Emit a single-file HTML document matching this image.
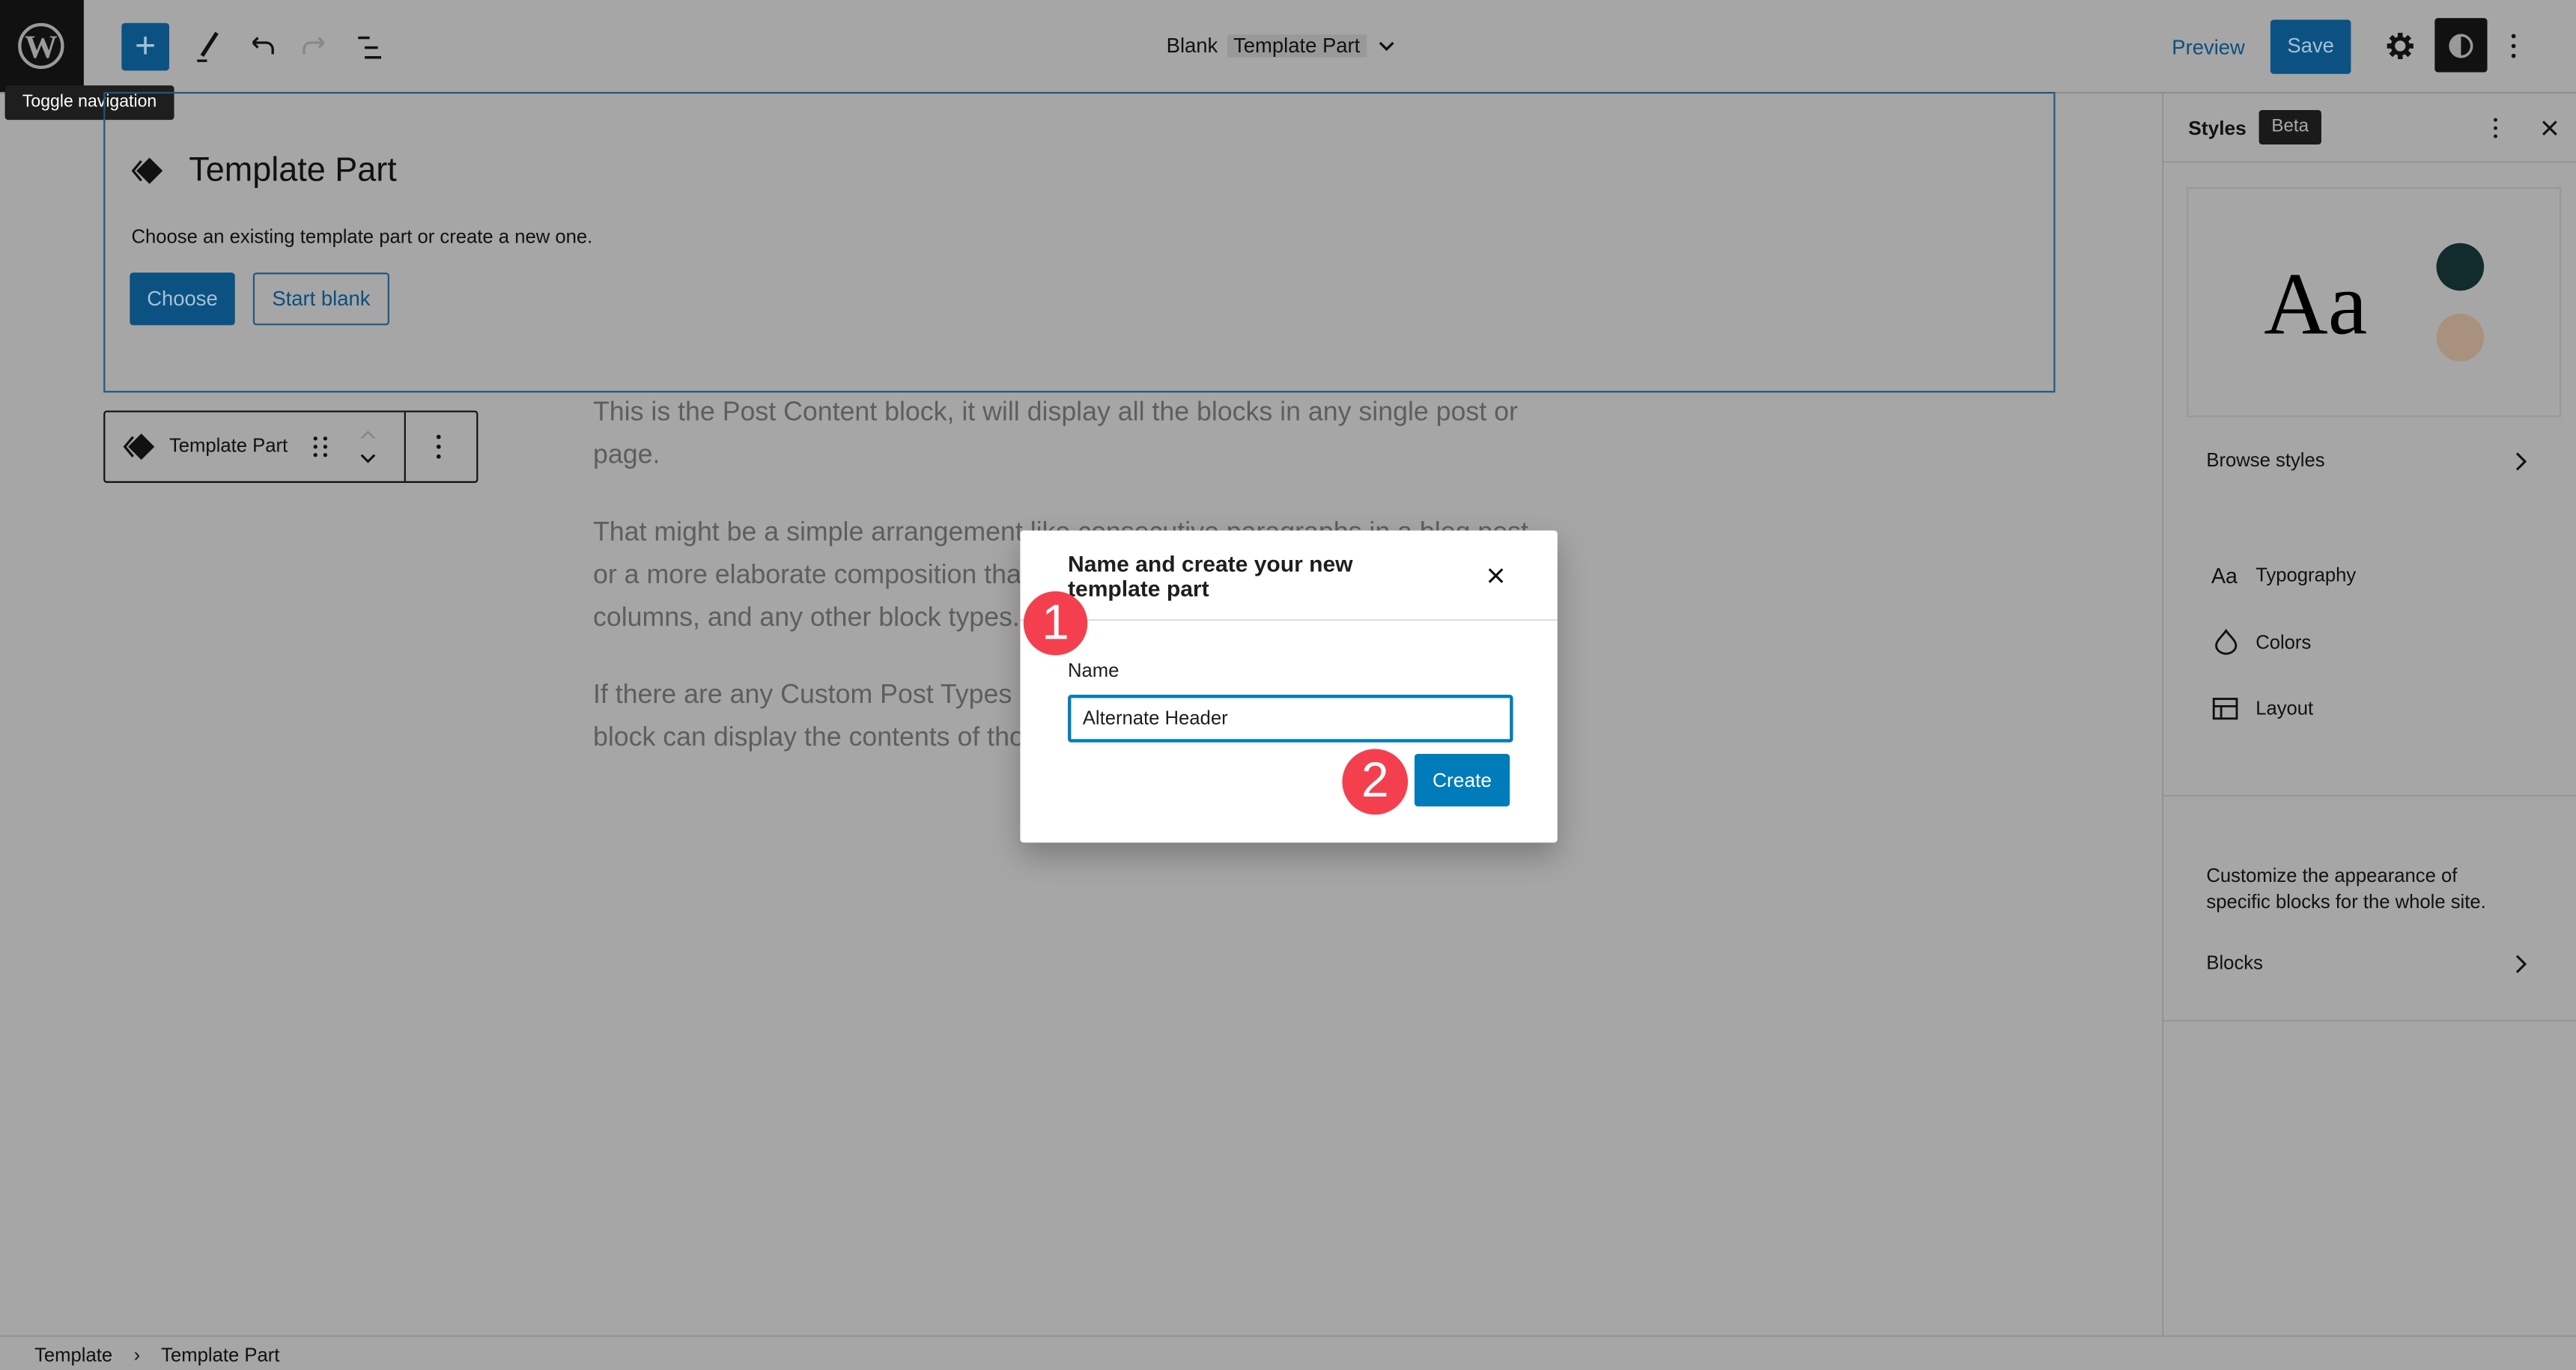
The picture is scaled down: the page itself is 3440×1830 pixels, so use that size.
<!DOCTYPE html>
<html><head><meta charset="utf-8">
<style>
html,body{margin:0;padding:0;width:3440px;height:1828px;overflow:hidden;background:#a6a6a6}
#s{position:absolute;left:0;top:0;width:1568px;height:833px;transform:scale(2.19388);transform-origin:0 0;font-family:"Liberation Sans",sans-serif;color:#111;background:#a6a6a6}
.a{position:absolute}
</style></head><body><div id="s">
<!-- top bar -->
<div class="a" style="left:0;top:0;width:1568px;height:56px;border-bottom:1px solid #8f8f8f;background:#a6a6a6"></div>
<div class="a" style="left:0;top:0;width:51px;height:56px;background:#111"></div>
<svg class="a" style="left:10px;top:13px" width="30" height="30" viewBox="0 0 30 30"><circle cx="15" cy="15" r="13" fill="none" stroke="#9a9a9a" stroke-width="2"/><text x="15" y="22" text-anchor="middle" font-family="Liberation Serif" font-weight="bold" font-size="20" fill="#9a9a9a">W</text></svg>
<div class="a" style="left:3px;top:52px;width:103px;height:21px;background:#1e1e1e;border-radius:2px;color:#fff;font-size:10.5px;line-height:21px;text-align:center">Toggle navigation</div>
<div class="a" style="left:74px;top:14px;width:29px;height:29px;background:#0b5283;border-radius:2px;color:#a6c0d6;font-size:22px;line-height:28px;text-align:center">+</div>
<svg class="a" style="left:115px;top:18px" width="22" height="22" viewBox="0 0 22 22"><path d="M17 2 L8 16" stroke="#111" stroke-width="2.4"/><path d="M5 19h6" stroke="#111" stroke-width="1.5"/></svg>
<svg class="a" style="left:148px;top:18px" width="22" height="22" viewBox="0 0 22 22"><path d="M6 8h8a4 4 0 0 1 4 4v3M6 8l3-3M6 8l3 3" fill="none" stroke="#111" stroke-width="1.5"/></svg>
<svg class="a" style="left:181px;top:18px" width="22" height="22" viewBox="0 0 22 22"><path d="M16 8H8a4 4 0 0 0-4 4v3M16 8l-3-3M16 8l-3 3" fill="none" stroke="#888" stroke-width="1.5"/></svg>
<svg class="a" style="left:214px;top:18px" width="22" height="22" viewBox="0 0 22 22"><path d="M4 5h7M8 11h8M8 17h10" stroke="#111" stroke-width="1.6"/></svg>
<div class="a" style="left:710px;top:20px;font-size:12.5px;line-height:16px">Blank <span style="background:#999;padding:0 4px;margin-left:2px">Template Part</span></div>
<svg class="a" style="left:838px;top:22px" width="12" height="12"><path d="M2 4l4 4 4-4" fill="none" stroke="#111" stroke-width="1.5"/></svg>
<div class="a" style="left:1322px;top:21px;font-size:12.5px;color:#0b4f80;line-height:16px">Preview</div>
<div class="a" style="left:1382px;top:12px;width:49px;height:33px;background:#0b5283;border-radius:2px;color:#a6c0d6;font-size:12.5px;line-height:33px;text-align:center">Save</div>
<svg class="a" style="left:1451px;top:18px" width="20" height="20" viewBox="0 0 20 20"><g stroke="#111" stroke-width="3" stroke-linecap="butt"><path d="M10 2v4M10 14v4M2 10h4M14 10h4M4.3 4.3l2.8 2.8M12.9 12.9l2.8 2.8M4.3 15.7l2.8-2.8M12.9 7.1l2.8-2.8"/></g><circle cx="10" cy="10" r="4.5" fill="none" stroke="#111" stroke-width="2.5"/></svg>
<div class="a" style="left:1482px;top:11px;width:32px;height:33px;background:#111;border-radius:2px"></div>
<svg class="a" style="left:1488px;top:18px" width="20" height="20"><circle cx="10" cy="10" r="6.5" fill="none" stroke="#999" stroke-width="1.6"/><path d="M10 3.5a6.5 6.5 0 0 0 0 13z" fill="#999"/></svg>
<svg class="a" style="left:1525px;top:19px" width="10" height="18"><g fill="#111"><circle cx="5" cy="3" r="1.3"/><circle cx="5" cy="9" r="1.3"/><circle cx="5" cy="15" r="1.3"/></g></svg>
<!-- template part block -->
<div class="a" style="left:63px;top:56px;width:1186px;height:181px;border:1px solid #1f587f"></div>
<svg class="a" style="left:80px;top:95px" width="20" height="18" viewBox="0 0 20 18"><path d="M11 1l8 8-8 8-8-8z" fill="#111"/><path d="M6 3L1 9l5 6" fill="none" stroke="#111" stroke-width="1.5"/></svg>
<div class="a" style="left:115px;top:92px;font-size:20.5px;line-height:24px">Template Part</div>
<div class="a" style="left:80px;top:137px;font-size:11.7px;line-height:16px">Choose an existing template part or create a new one.</div>
<div class="a" style="left:79px;top:166px;width:64px;height:32px;background:#0b5283;border-radius:2px;color:#a6c0d6;font-size:12.5px;line-height:32px;text-align:center">Choose</div>
<div class="a" style="left:154px;top:166px;width:81px;height:30px;border:1px solid #1f587f;border-radius:2px;color:#0b4f80;font-size:12.5px;line-height:30px;text-align:center">Start blank</div>
<!-- toolbar -->
<div class="a" style="left:63px;top:250px;width:226px;height:42px;border:1px solid #111;border-radius:2px"></div>
<div class="a" style="left:246px;top:251px;width:1px;height:42px;background:#111"></div>
<svg class="a" style="left:75px;top:263px" width="20" height="18" viewBox="0 0 20 18"><path d="M11 1l8 8-8 8-8-8z" fill="#111"/><path d="M6 3L1 9l5 6" fill="none" stroke="#111" stroke-width="1.5"/></svg>
<div class="a" style="left:103px;top:264px;font-size:11.7px;line-height:16px">Template Part</div>
<svg class="a" style="left:188px;top:263px" width="14" height="18"><g fill="#111"><circle cx="4" cy="4" r="1.2"/><circle cx="10" cy="4" r="1.2"/><circle cx="4" cy="9" r="1.2"/><circle cx="10" cy="9" r="1.2"/><circle cx="4" cy="14" r="1.2"/><circle cx="10" cy="14" r="1.2"/></g></svg>
<svg class="a" style="left:216px;top:258px" width="16" height="28"><path d="M4 9l4-4 4 4" fill="none" stroke="#888" stroke-width="1.2"/><path d="M4 19l4 4 4-4" fill="none" stroke="#111" stroke-width="1.4"/></svg>
<svg class="a" style="left:262px;top:263px" width="10" height="18"><g fill="#111"><circle cx="5" cy="3" r="1.3"/><circle cx="5" cy="9" r="1.3"/><circle cx="5" cy="15" r="1.3"/></g></svg>
<!-- post content text -->
<div class="a" style="left:361px;top:238px;width:580px;font-size:16.3px;line-height:26px;color:#5e5e5e">This is the Post Content block, it will display all the blocks in any single post or page.<div style="height:21px"></div>That might be a simple arrangement like consecutive paragraphs in a blog post, or a more elaborate composition that includes image galleries, videos, tables, columns, and any other block types.<div style="height:21px"></div>If there are any Custom Post Types registered at your site, the Post Content block can display the contents of those entries as well.</div>
<!-- sidebar -->
<div class="a" style="left:1316px;top:57px;width:1px;height:757px;background:#939393"></div>
<div class="a" style="left:1317px;top:98px;width:251px;height:1px;background:#969696"></div>
<div class="a" style="left:1332px;top:70px;font-size:12px;font-weight:bold;line-height:16px">Styles</div>
<div class="a" style="left:1375px;top:67px;width:38px;height:21px;background:#1a1a1a;border-radius:2px;color:#aaa;font-size:11px;line-height:21px;text-align:center">Beta</div>
<svg class="a" style="left:1514px;top:70px" width="10" height="16"><g fill="#111"><circle cx="5" cy="3" r="1.1"/><circle cx="5" cy="8" r="1.1"/><circle cx="5" cy="13" r="1.1"/></g></svg>
<svg class="a" style="left:1546px;top:72px" width="12" height="12"><path d="M2 2l8 8M10 2l-8 8" stroke="#111" stroke-width="1.4"/></svg>
<div class="a" style="left:1331px;top:114px;width:226px;height:138px;border:1px solid #999"></div>
<div class="a" style="left:1378px;top:153px;font-family:'Liberation Serif',serif;font-size:54px;line-height:64px;color:#000">Aa</div>
<div class="a" style="left:1483px;top:148px;width:29px;height:29px;border-radius:50%;background:#122b2c"></div>
<div class="a" style="left:1483px;top:191px;width:29px;height:29px;border-radius:50%;background:#a8927e"></div>
<div class="a" style="left:1343px;top:273px;font-size:11.7px;line-height:16px">Browse styles</div>
<svg class="a" style="left:1529px;top:274px" width="12" height="14"><path d="M3 2l5 5-5 5" fill="none" stroke="#111" stroke-width="1.4"/></svg>
<div class="a" style="left:1346px;top:343px;font-size:13px;line-height:16px">Aa</div>
<div class="a" style="left:1373px;top:343px;font-size:11.7px;line-height:16px">Typography</div>
<svg class="a" style="left:1346px;top:382px" width="18" height="18"><path d="M9 2C7 5 3 8 3 11a6 5 0 0 0 12 0c0-3-4-6-6-9z" fill="none" stroke="#111" stroke-width="1.3"/></svg>
<div class="a" style="left:1373px;top:384px;font-size:11.7px;line-height:16px">Colors</div>
<svg class="a" style="left:1346px;top:423px" width="18" height="18"><rect x="1.5" y="2.5" width="14" height="12" fill="none" stroke="#111" stroke-width="1.3"/><path d="M1.5 7h14M6 7v7.5" stroke="#111" stroke-width="1.3"/></svg>
<div class="a" style="left:1373px;top:424px;font-size:11.7px;line-height:16px">Layout</div>
<div class="a" style="left:1317px;top:484px;width:251px;height:1px;background:#969696"></div>
<div class="a" style="left:1343px;top:526px;font-size:11.7px;line-height:16px">Customize the appearance of<br>specific blocks for the whole site.</div>
<div class="a" style="left:1343px;top:579px;font-size:11.7px;line-height:16px">Blocks</div>
<svg class="a" style="left:1529px;top:580px" width="12" height="14"><path d="M3 2l5 5-5 5" fill="none" stroke="#111" stroke-width="1.4"/></svg>
<div class="a" style="left:1317px;top:621px;width:251px;height:1px;background:#969696"></div>
<!-- footer -->
<div class="a" style="left:0;top:813px;width:1568px;height:1px;background:#939393"></div>
<div class="a" style="left:21px;top:818px;font-size:11.7px;line-height:16px">Template &nbsp;&nbsp;&nbsp;›&nbsp;&nbsp;&nbsp; Template Part</div>
<!-- modal -->
<div class="a" style="left:621px;top:323px;width:327px;height:190px;background:#fff;border-radius:2px;box-shadow:0 8px 18px rgba(0,0,0,.25)"></div>
<div class="a" style="left:650px;top:336px;font-size:13.7px;font-weight:bold;line-height:15px;color:#1e1e1e;width:210px">Name and create your new template part</div>
<svg class="a" style="left:905px;top:345px" width="11" height="11"><path d="M1.5 1.5l8 8M9.5 1.5l-8 8" stroke="#111" stroke-width="1.4"/></svg>
<div class="a" style="left:621px;top:377px;width:327px;height:1px;background:#ddd"></div>
<div class="a" style="left:650px;top:401px;font-size:11.7px;line-height:16px;color:#1e1e1e">Name</div>
<div class="a" style="left:650px;top:423px;width:267px;height:25px;border:2px solid #007cba;border-radius:2px"></div>
<div class="a" style="left:659px;top:430px;font-size:11.7px;line-height:16px;color:#1e1e1e">Alternate Header</div>
<div class="a" style="left:861px;top:459px;width:58px;height:32px;background:#007cba;border-radius:2px;color:#fff;font-size:12px;line-height:32px;text-align:center">Create</div>
<div class="a" style="left:623px;top:360px;width:39px;height:39px;border-radius:50%;background:#f4404e;color:#fff;font-size:30px;line-height:39px;text-align:center">1</div>
<div class="a" style="left:817px;top:456px;width:40px;height:40px;border-radius:50%;background:#f4404e;color:#fff;font-size:30px;line-height:40px;text-align:center">2</div>
</div></body></html>
